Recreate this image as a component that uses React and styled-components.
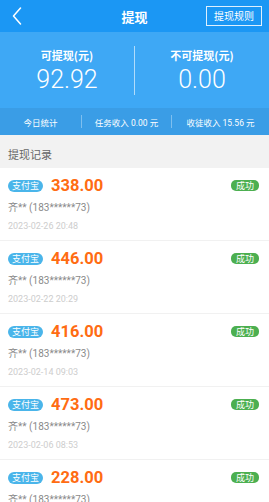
import React from 'react'
import styled, { createGlobalStyle } from 'styled-components'

const GlobalStyle = createGlobalStyle`
  html, body {
    margin: 0;
    padding: 0;
    background: #f2f2f2;
    font-family: Roboto, "Noto Sans CJK SC", sans-serif;
  }
`;

const Page = styled.div`
  width: 269px;
  height: 502px;
  overflow: hidden;
  background: #f2f2f2;
`;

const Header = styled.div`
  height: 32px;
  background: #1b97f4;
  display: grid;
  grid-template-columns: 70px 1fr 70px;
  align-items: center;
  color: #fff;
`;

const Back = styled.div`
  display: flex;
  align-items: center;
  padding-left: 12px;
`;

const Title = styled.div`
  text-align: center;
  font-size: 13px;
  font-weight: 700;
  font-family: "Noto Sans CJK SC", sans-serif;
`;

const RuleButton = styled.div`
  justify-self: end;
  margin-right: 7px;
  border: 1px solid rgba(255, 255, 255, 0.85);
  font-size: 10px;
  line-height: 18px;
  padding: 0 7px;
  white-space: nowrap;
  font-family: "Noto Sans CJK SC", sans-serif;
`;

const Summary = styled.div`
  height: 76px;
  background: #3ea8f5;
  display: grid;
  grid-template-columns: 1fr 1px 1fr;
  align-items: center;
  color: #fff;
`;

const SummaryCol = styled.div`
  display: flex;
  flex-direction: column;
  align-items: center;
  padding-top: 2px;
`;

const SummaryLabel = styled.div`
  font-size: 11px;
  font-weight: 700;
  line-height: 14px;
  font-family: "Noto Sans CJK SC", sans-serif;
`;

const SummaryValue = styled.div`
  font-size: 25px;
  font-weight: 300;
  line-height: 30px;
  margin-top: 3px;
`;

const VLine = styled.div`
  width: 1px;
  height: ${(p) => p.h}px;
  background: rgba(255, 255, 255, ${(p) => p.alpha});
`;

const StatsBar = styled.div`
  height: 27px;
  background: #3a9de6;
  display: grid;
  grid-template-columns: 81px 1px 89px 1px 1fr;
  align-items: center;
  color: #fff;
  font-size: 8.5px;
  font-family: Roboto, "Noto Sans CJK SC", sans-serif;
`;

const StatsCell = styled.div`
  text-align: center;
  white-space: nowrap;
`;

const SectionTitle = styled.div`
  height: 33px;
  padding: 4px 8px 0;
  display: flex;
  align-items: center;
  box-sizing: border-box;
  font-size: 11px;
  color: #666;
  font-family: "Noto Sans CJK SC", sans-serif;
`;

const List = styled.div`
  background: #fff;
`;

const Item = styled.div`
  padding: 8px 10px 8px 8px;
  border-bottom: 1px solid #f1f1f1;
`;

const TopRow = styled.div`
  display: flex;
  align-items: center;
  height: 18px;
`;

const PayTag = styled.span`
  background: #4ab5ea;
  color: #fff;
  font-size: 9px;
  line-height: 12px;
  height: 12px;
  padding: 0 4px;
  border-radius: 6px;
  font-family: "Noto Sans CJK SC", sans-serif;
  margin-top: 2px;
`;

const Amount = styled.span`
  color: #ff6c12;
  font-size: 16.5px;
  font-weight: 700;
  margin-left: 8px;
  flex: 1;
`;

const Status = styled.span`
  background: #4caf50;
  color: #fff;
  font-size: 9px;
  line-height: 11px;
  padding: 0 5px;
  border-radius: 5px;
  font-family: "Noto Sans CJK SC", sans-serif;
`;

const Account = styled.div`
  font-size: 10px;
  color: #8a8a8a;
  line-height: 12px;
  margin-top: 8px;
`;

const DateText = styled.div`
  font-size: 9px;
  color: #cdcdcd;
  line-height: 12px;
  margin-top: 6px;
`;

const records = [
  { amount: '338.00', date: '2023-02-26 20:48' },
  { amount: '446.00', date: '2023-02-22 20:29' },
  { amount: '416.00', date: '2023-02-14 09:03' },
  { amount: '473.00', date: '2023-02-06 08:53' },
  { amount: '228.00', date: '2023-02-01 10:12' },
];

export default function App() {
  return (
    <Page>
      <GlobalStyle />
      <Header>
        <Back>
          <svg width="10" height="18" viewBox="0 0 10 18" fill="none">
            <path d="M8.5 1 L1.5 9 L8.5 17" stroke="#fff" strokeWidth="1.5" strokeLinecap="round" strokeLinejoin="round" />
          </svg>
        </Back>
        <Title>提现</Title>
        <RuleButton>提现规则</RuleButton>
      </Header>
      <Summary>
        <SummaryCol>
          <SummaryLabel>可提现(元)</SummaryLabel>
          <SummaryValue>92.92</SummaryValue>
        </SummaryCol>
        <VLine h={49} alpha={0.6} />
        <SummaryCol>
          <SummaryLabel>不可提现(元)</SummaryLabel>
          <SummaryValue>0.00</SummaryValue>
        </SummaryCol>
      </Summary>
      <StatsBar>
        <StatsCell>今日统计</StatsCell>
        <VLine h={13} alpha={0.35} />
        <StatsCell>任务收入 0.00 元</StatsCell>
        <VLine h={13} alpha={0.35} />
        <StatsCell>收徒收入 15.56 元</StatsCell>
      </StatsBar>
      <SectionTitle>提现记录</SectionTitle>
      <List>
        {records.map((r) => (
          <Item key={r.date}>
            <TopRow>
              <PayTag>支付宝</PayTag>
              <Amount>{r.amount}</Amount>
              <Status>成功</Status>
            </TopRow>
            <Account>齐** (183******73)</Account>
            <DateText>{r.date}</DateText>
          </Item>
        ))}
      </List>
    </Page>
  );
}
